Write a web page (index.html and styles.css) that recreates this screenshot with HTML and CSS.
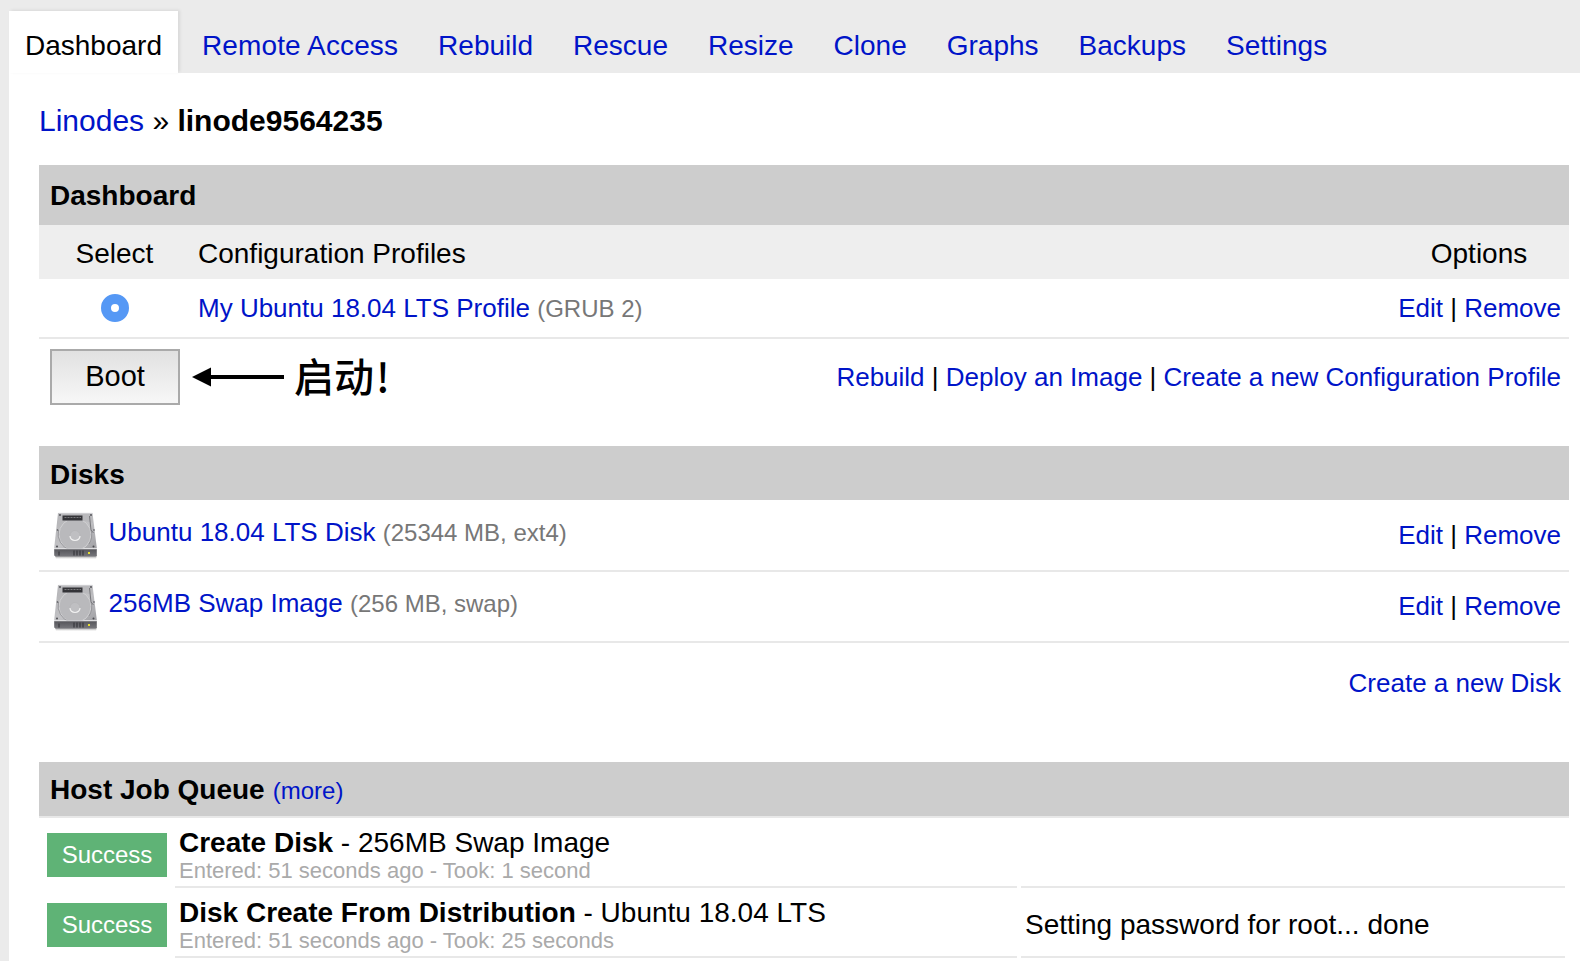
FILE: index.html
```html
<!DOCTYPE html>
<html lang="en">
<head>
<meta charset="utf-8">
<title>linode9564235 - Dashboard</title>
<link rel="stylesheet" href="styles.css">
</head>
<body>
<svg class="defs" width="0" height="0" aria-hidden="true">
  <defs>
    <linearGradient id="metal" x1="0" y1="0" x2="1" y2="1">
      <stop offset="0" stop-color="#b2b2b4"/><stop offset=".55" stop-color="#c2c2c5"/><stop offset="1" stop-color="#a0a0a4"/>
    </linearGradient>
    <linearGradient id="front" x1="0" y1="0" x2="0" y2="1">
      <stop offset="0" stop-color="#55555a"/><stop offset="1" stop-color="#77777c"/>
    </linearGradient>
    <linearGradient id="shade" x1="0" y1="0" x2="0" y2="1">
      <stop offset="0" stop-color="#888"/><stop offset="1" stop-color="#fff"/>
    </linearGradient>
    <symbol id="disk" viewBox="0 0 46 48">
      <path d="M2 43H44L43 47H3Z" fill="url(#shade)"/>
      <path d="M5 1H39.500L43.800 36H1.200Z" fill="url(#metal)"/>
      <path d="M5.500 1.300H39.500" stroke="#d8d8da" stroke-width=".8"/>
      <circle cx="22" cy="22.500" r="16" fill="#b9b9bc" stroke="#d0d0d2" stroke-width="1"/>
      <path d="M5.500 18A17 17 0 0 0 17 38M38 18A17 17 0 0 1 36 32" fill="none" stroke="#88888c" stroke-width=".7"/>
      <path d="M5.500 2H39L40 11L32 9H10L5 13Z" fill="#b9b9bc"/>
      <rect x="9.500" y="3.500" width="20" height="5" fill="#343438"/>
      <path d="M11.500 5.500H28" stroke="#8a8a8e" stroke-width=".8" stroke-dasharray="2 1"/>
      <path d="M36.500 4L38 18L40.500 21" fill="none" stroke="#77777b" stroke-width="1"/>
      <circle cx="22" cy="23.500" r="5" fill="#bfbfc2" stroke="#b0b0b3" stroke-width=".5"/>
      <path d="M17 24A5 4.500 0 0 0 27 24" fill="none" stroke="#f2f2f2" stroke-width="1.200"/>
      <g fill="#4d4d52"><circle cx="7" cy="3" r=".9"/><circle cx="38" cy="3" r=".9"/><circle cx="4.500" cy="18" r=".8"/><circle cx="41" cy="18" r=".8"/><circle cx="4" cy="34.500" r="1"/><circle cx="40.500" cy="34.500" r="1"/></g>
      <path d="M1.200 37H43.800V43.500L42.500 44.500H2.500L1.200 43.500Z" fill="url(#front)"/>
      <path d="M1.200 36.800H43.800" stroke="#d0d0d3" stroke-width="1"/>
      <path d="M6 39.500V43.500M21 38.500V43.500M24 38.500V43.500M27 38.500V43.500M30 38.500V43.500" stroke="#38383c" stroke-width="1.200"/>
      <rect x="35" y="40" width="2" height="2" fill="#e5de32"/>
    </symbol>
  </defs>
</svg>
<nav class="tabs">
  <a class="tab tab-active">Dashboard</a><a class="tab tab-remote">Remote Access</a><a class="tab">Rebuild</a><a class="tab">Rescue</a><a class="tab">Resize</a><a class="tab">Clone</a><a class="tab">Graphs</a><a class="tab">Backups</a><a class="tab">Settings</a>
</nav>
<main class="page">
  <div class="crumbs"><a>Linodes</a> » <b>linode9564235</b></div>

  <h2 class="bar bar-tall">Dashboard</h2>
  <div class="columns"><span class="col-select">Select</span><span class="col-name">Configuration Profiles</span><span class="col-options">Options</span></div>
  <div class="row profile"><span class="col-select"><i class="radio"></i></span><span class="col-name"><a>My Ubuntu 18.04 LTS Profile</a> <small>(GRUB 2)</small></span><span class="links"><a>Edit</a> | <a>Remove</a></span></div>
  <div class="actions">
    <button class="boot">Boot</button>
    <svg class="arrow" width="92" height="20" viewBox="0 0 92 20"><path d="M0 10L19 .5V19.500Z"/><path d="M17 8H92V12H17Z"/></svg>
    <span class="note" lang="zh">启动<span class="bang">!</span></span>
    <span class="links"><a>Rebuild</a> | <a>Deploy an Image</a> | <a>Create a new Configuration Profile</a></span>
  </div>

  <h2 class="bar">Disks</h2>
  <div class="row disk"><svg class="disk-icon"><use href="#disk"/></svg><span class="disk-name"><a>Ubuntu 18.04 LTS Disk</a> <small>(25344 MB, ext4)</small></span><span class="links"><a>Edit</a> | <a>Remove</a></span></div>
  <div class="row disk"><svg class="disk-icon"><use href="#disk"/></svg><span class="disk-name"><a>256MB Swap Image</a> <small>(256 MB, swap)</small></span><span class="links"><a>Edit</a> | <a>Remove</a></span></div>
  <div class="new-disk"><span class="links"><a>Create a new Disk</a></span></div>

  <h2 class="bar bar-queue">Host Job Queue <a class="more">(more)</a></h2>
  <div class="jobs">
    <span class="badge">Success</span>
    <div class="job"><div class="job-title"><b>Create Disk</b> - 256MB Swap Image</div><div class="job-time">Entered: 51 seconds ago - Took: 1 second</div></div>
    <div class="job-msg"></div>
    <span class="badge">Success</span>
    <div class="job"><div class="job-title"><b>Disk Create From Distribution</b> - Ubuntu 18.04 LTS</div><div class="job-time">Entered: 51 seconds ago - Took: 25 seconds</div></div>
    <div class="job-msg">Setting password for root... done</div>
  </div>
</main>
</body>
</html>
```
FILE: styles.css
```css
* { box-sizing: border-box; }
html { background: #fff; }
body {
  margin: 0;
  width: 1580px;
  height: 968px;
  overflow: hidden;
  background: linear-gradient(#ebebeb, #ebebeb) 0 0 / 100% 961px no-repeat;
  color: #000;
  font-family: "Liberation Sans", Arial, "Noto Sans CJK SC", sans-serif;
  font-size: 28px;
}
a { color: #0014c8; }
.defs { display: block; }
.tabs { display: flex; height: 73px; padding: 11px 0 0 9px; }
.tab { padding: 0 20px; height: 62px; line-height: 69px; white-space: nowrap; }
.tab-active { width: 169px; padding: 0 16px; margin-right: 4px; background: #fff; color: #000; box-shadow: 2px -1px 3px rgba(0,0,0,.08); }
.tab-remote { letter-spacing: .12px; }
.page { height: 895px; margin-left: 9px; padding: 0 11px 0 30px; background: #fff; }
.crumbs { height: 92px; padding-top: 30px; line-height: 36px; font-size: 30px; white-space: nowrap; }
.bar { display: flex; align-items: center; margin: 0; height: 54px; padding: 3px 0 0 11px; background: #cdcdcd; font-size: 28px; font-weight: bold; }
.bar-tall { height: 60px; padding-top: 1px; }
.columns { display: flex; align-items: center; height: 54px; padding-top: 3px; background: #eee; }
.col-select { width: 151px; display: flex; justify-content: center; }
.col-name { flex: 1; margin-left: 8px; }
.col-options { width: 180px; text-align: center; }
.row { display: flex; align-items: center; border-bottom: 2px solid #e8e8e8; font-size: 26px; }
small { color: #777; font-size: 24px; }
.profile { height: 60px; }
.radio { width: 28px; height: 28px; border: 10px solid #5598f5; border-radius: 50%; background: #fff; }
.links { margin-left: auto; padding-right: 8px; font-size: 26px; white-space: nowrap; }
.actions { display: flex; align-items: center; height: 107px; padding: 10px 0 41px 11px; }
.boot { width: 130px; height: 56px; padding: 0 0 2px; border: 2px solid #aaa; background: linear-gradient(#e1e1e1, #f7f7f7); color: #000; font: 29px "Liberation Sans", Arial, sans-serif; }
.arrow { margin-left: 12px; }
.note { margin-left: 10px; padding-bottom: 5px; font: 500 40px/50px "Noto Sans CJK SC", sans-serif; }
.bang { margin-left: 2px; }
.disk { height: 72px; padding-left: 14px; }
.disk + .disk { height: 71px; }
.disk-icon { width: 46px; height: 48px; margin-top: 2px; }
.disk-name { margin-left: 9.6px; padding-bottom: 5px; }
.disk + .disk .disk-name { padding-bottom: 6px; }
.new-disk { display: flex; height: 119px; padding-top: 25px; }
.bar-queue { height: 56px; padding-top: 2px; border-bottom: 2px solid #e8e8e8; }
.more { margin-left: 8px; padding-top: 2px; font-size: 24px; font-weight: normal; }
.jobs { display: grid; grid-template-columns: 128px 842px 544px; grid-auto-rows: 70px; column-gap: 4px; margin-left: 4px; }
.badge { width: 120px; height: 44px; margin: 15px 0 0 4px; background: #5fb376; color: #fff; font-size: 24px; line-height: 44px; text-align: center; }
.job { border-bottom: 2px solid #e8e8e8; padding: 8px 0 0 4px; white-space: nowrap; }
.job-title { height: 33px; line-height: 34px; }
.job-time { color: #aaa; font-size: 22px; line-height: 24px; }
.job-msg { border-bottom: 2px solid #e8e8e8; padding-left: 4px; line-height: 74px; }
```
